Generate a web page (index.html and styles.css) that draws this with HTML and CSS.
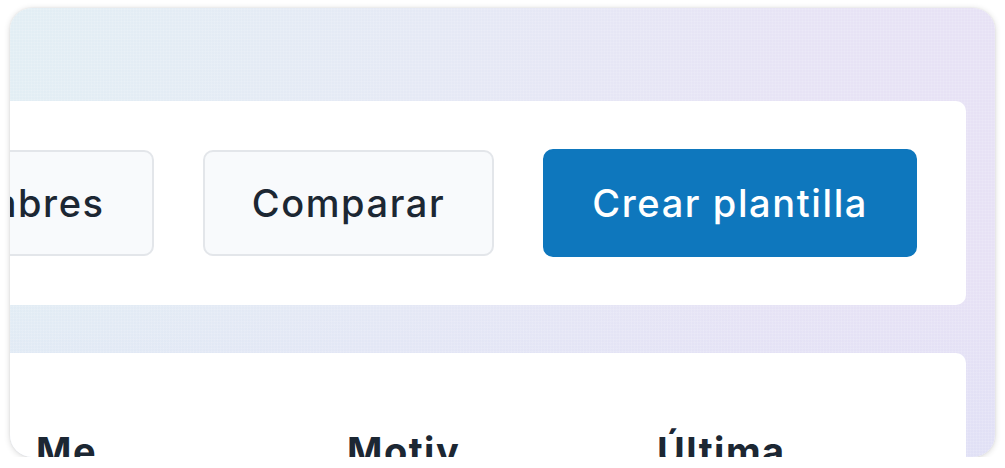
FILE: index.html
```html
<!DOCTYPE html>
<html lang="es">
<head>
<meta charset="utf-8">
<title>Plantillas</title>
<link rel="stylesheet" href="styles.css">
</head>
<body>
<div class="frame">
  <section class="card toolbar">
    <button class="btn btn-secondary">Nombres</button>
    <button class="btn btn-secondary">Comparar</button>
    <button class="btn btn-primary">Crear plantilla</button>
  </section>
  <section class="card table-card">
    <div class="table-head">
      <div class="th">Me</div>
      <div class="th">Motiv</div>
      <div class="th">Última</div>
    </div>
  </section>
</div>
</body>
</html>
```
FILE: styles.css
```css
html, body {
  margin: 0;
  padding: 0;
  background: #ffffff;
  font-family: "Inter", "Open Sans", sans-serif;
  overflow: hidden;
}

.frame {
  margin: 8px 10px 0 10px;
  height: 449px;
  border-radius: 22px;
  overflow: hidden;
  box-shadow: 0 1px 6px rgba(0, 0, 0, 0.16), 0 0 2px rgba(0, 0, 0, 0.08);
  background:
    repeating-linear-gradient(90deg, rgba(255,255,255,0.10) 0 1px, rgba(255,255,255,0) 1px 3px),
    repeating-linear-gradient(0deg, rgba(255,255,255,0.10) 0 1px, rgba(255,255,255,0) 1px 3px),
    linear-gradient(180deg, rgba(255,255,255,0) 60%, rgba(220,224,246,0.6) 100%),
    linear-gradient(100deg, #e2eef4 0%, #e5e9f5 40%, #e7e3f5 75%, #e7e1f5 100%);
  padding: 93px 29px 0 0;
  box-sizing: border-box;
  display: flex;
  flex-direction: column;
  gap: 48px;
}

.card {
  background: #ffffff;
  border-radius: 10px;
  margin-left: -20px;
}

.toolbar {
  height: 204px;
  flex-shrink: 0;
  display: flex;
  justify-content: flex-end;
  align-items: center;
  gap: 49px;
  padding: 0 49px;
  overflow: hidden;
}

.btn {
  flex-shrink: 0;
  font-family: inherit;
  font-size: 38px;
  font-weight: 500;
  letter-spacing: 1.6px;
  border-radius: 10px;
  padding: 0 47px;
  cursor: pointer;
  white-space: nowrap;
}

.btn-secondary {
  height: 106px;
  background: #f8fafc;
  border: 2px solid #e3e6ea;
  color: #1c2733;
}

.btn-primary {
  height: 108px;
  background: #0e77bd;
  border: 2px solid #0e77bd;
  color: #ffffff;
}

.table-card {
  flex: 1;
  padding: 75px 0 0 46px;
}

.table-head {
  display: grid;
  grid-template-columns: 311px 310px 310px;
}

.th {
  font-size: 38px;
  font-weight: 700;
  letter-spacing: 1.5px;
  color: #1c2733;
}
```
